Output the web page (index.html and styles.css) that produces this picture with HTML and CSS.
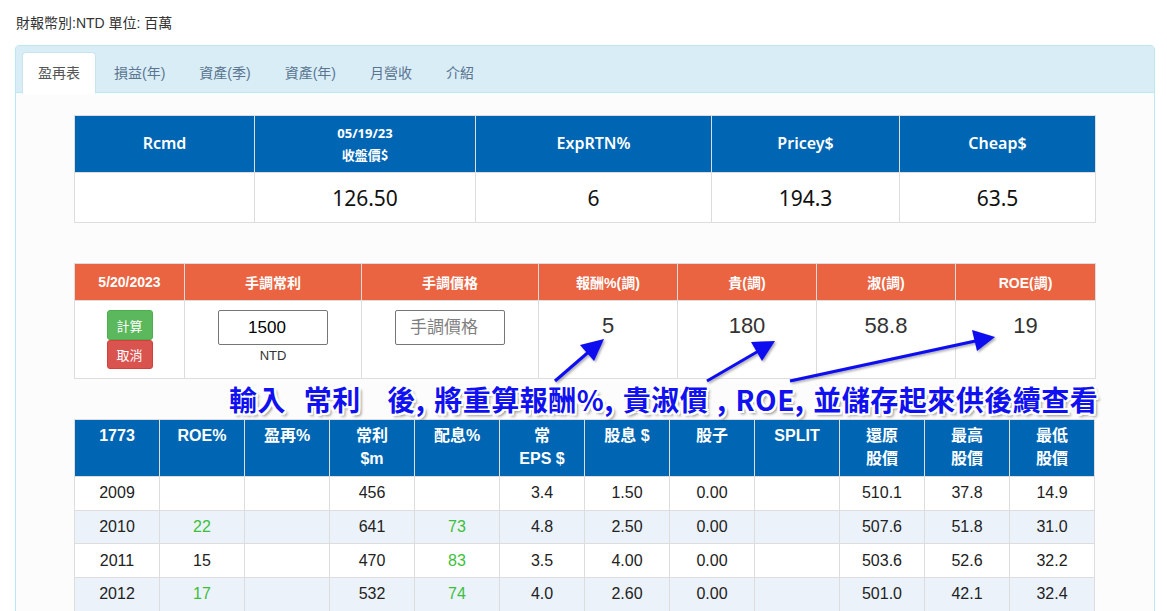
FILE: index.html
```html
<!DOCTYPE html>
<html>
<head>
<meta charset="utf-8">
<link rel="stylesheet" href="styles.css">
</head>
<body>
<div class="page">
  <div class="unit">財報幣別:NTD 單位: 百萬</div>
  <div class="panel">
    <div class="panel-heading">
      <ul class="tabs">
        <li class="tab active">盈再表</li>
        <li class="tab">損益(年)</li>
        <li class="tab">資產(季)</li>
        <li class="tab">資產(年)</li>
        <li class="tab">月營收</li>
        <li class="tab">介紹</li>
      </ul>
    </div>
    <div class="panel-body">
      <table class="t1">
        <colgroup><col style="width:180px"><col style="width:221px"><col style="width:236px"><col style="width:188px"><col style="width:196px"></colgroup>
        <tr class="h">
          <th>Rcmd</th>
          <th><span class="date">05/19/23</span><br><span class="sub">收盤價$</span></th>
          <th>ExpRTN%</th>
          <th>Pricey$</th>
          <th>Cheap$</th>
        </tr>
        <tr class="b">
          <td></td><td>126.50</td><td>6</td><td>194.3</td><td>63.5</td>
        </tr>
      </table>

      <table class="t2">
        <colgroup><col style="width:110px"><col style="width:177px"><col style="width:177px"><col style="width:139px"><col style="width:139px"><col style="width:139px"><col style="width:140px"></colgroup>
        <tr class="h">
          <th>5/20/2023</th><th>手調常利</th><th>手調價格</th><th>報酬%(調)</th><th>貴(調)</th><th>淑(調)</th><th>ROE(調)</th>
        </tr>
        <tr class="b">
          <td>
            <div class="btns">
              <button class="btn ok">計算</button>
              <button class="btn cancel">取消</button>
            </div>
          </td>
          <td><input class="inp" type="text" value="1500"><div class="ntd">NTD</div></td>
          <td><input class="inp" type="text" placeholder="手調價格"></td>
          <td class="val">5</td>
          <td class="val">180</td>
          <td class="val">58.8</td>
          <td class="val">19</td>
        </tr>
      </table>

      <table class="t3">
        <colgroup><col><col><col><col><col><col><col><col><col><col><col><col></colgroup>
        <tr class="h">
          <th>1773</th><th>ROE%</th><th>盈再%</th><th>常利<br>$m</th><th>配息%</th><th>常<br>EPS $</th><th>股息 $</th><th>股子</th><th>SPLIT</th><th>還原<br>股價</th><th>最高<br>股價</th><th>最低<br>股價</th>
        </tr>
        <tr>
          <td>2009</td><td></td><td></td><td>456</td><td></td><td>3.4</td><td>1.50</td><td>0.00</td><td></td><td>510.1</td><td>37.8</td><td>14.9</td>
        </tr>
        <tr class="alt">
          <td>2010</td><td class="g">22</td><td></td><td>641</td><td class="g">73</td><td>4.8</td><td>2.50</td><td>0.00</td><td></td><td>507.6</td><td>51.8</td><td>31.0</td>
        </tr>
        <tr>
          <td>2011</td><td>15</td><td></td><td>470</td><td class="g">83</td><td>3.5</td><td>4.00</td><td>0.00</td><td></td><td>503.6</td><td>52.6</td><td>32.2</td>
        </tr>
        <tr class="alt">
          <td>2012</td><td class="g">17</td><td></td><td>532</td><td class="g">74</td><td>4.0</td><td>2.60</td><td>0.00</td><td></td><td>501.0</td><td>42.1</td><td>32.4</td>
        </tr>
      </table>
    </div>
  </div>

  <svg class="arrows" width="1167" height="611" viewBox="0 0 1167 611">
    <defs>
      <filter id="sh" x="-20%" y="-20%" width="140%" height="140%">
        <feDropShadow dx="1.5" dy="1.5" stdDeviation="1" flood-color="#000" flood-opacity="0.35"/>
      </filter>
    </defs>
    <g filter="url(#sh)" fill="#0a0aef" stroke="#0a0aef">
      <line x1="555" y1="381" x2="592" y2="349" stroke-width="3"/>
      <polygon points="604,339 580,345 594,361" stroke="none"/>
      <line x1="707" y1="381" x2="762" y2="349" stroke-width="3"/>
      <polygon points="775,341 751,342 762,361" stroke="none"/>
      <line x1="790" y1="381" x2="980" y2="340" stroke-width="3"/>
      <polygon points="995,337 972,330 977,351" stroke="none"/>
    </g>
  </svg>
  <div class="annot">輸入  常利   後, 將重算報酬%, 貴淑價 , ROE, 並儲存起來供後續查看</div>
</div>
</body>
</html>
```

FILE: styles.css
```css
html, body {
  margin: 0;
  padding: 0;
  background: #fff;
}
body {
  font-family: "Liberation Sans", "Noto Sans CJK TC", sans-serif;
  color: #333;
  overflow: hidden;
}
.page {
  position: relative;
  width: 1167px;
  height: 611px;
  overflow: hidden;
}
.unit {
  padding: 14px 0 0 16px;
  font-size: 14px;
  line-height: 18px;
  color: #333;
}
.panel {
  margin: 13px 0 0 15px;
  width: 1140px;
  box-sizing: border-box;
  border: 1px solid #bce8f1;
  border-radius: 4px;
  background: #fcfcfc;
}
.panel-heading {
  background: #d9edf7;
  border-bottom: 1px solid #bce8f1;
  border-radius: 3px 3px 0 0;
  padding: 6px 6px 0;
  height: 40px;
}
.tabs {
  list-style: none;
  margin: 0;
  padding: 0;
  display: flex;
}
.tab {
  padding: 10px 15px;
  line-height: 20px;
  font-size: 14px;
  border: 1px solid transparent;
  border-radius: 4px 4px 0 0;
  margin-right: 2px;
  color: #5a7590;
}
.tab.active {
  background: #fff;
  border-color: #c8e5ee #c8e5ee #fff;
  color: #555;
}
.panel-body {
  padding: 22px 59px 40px 58px;
}
table {
  border-collapse: collapse;
  width: 100%;
  table-layout: fixed;
  text-align: center;
}
th, td {
  border: 1px solid #ddd;
  padding: 0;
  box-sizing: border-box;
}
.t1 th {
  background: #0066b4;
  color: #fff;
  height: 57px;
  font-family: "Noto Sans", "Noto Sans CJK TC", sans-serif;
  font-weight: 600;
  font-size: 16px;
  padding-bottom: 3px;
}
.t1 .date {
  font-size: 13px;
  line-height: 20px;
  font-weight: 700;
}
.t1 .sub {
  font-family: "Noto Sans CJK TC", sans-serif;
  font-size: 13px;
  line-height: 20px;
  font-weight: 700;
}
.t1 td {
  background: #fff;
  height: 50px;
  font-family: "Noto Sans", sans-serif;
  font-size: 21px;
  color: #111;
}
.t2 {
  margin-top: 40px;
}
.t2 th {
  background: #ea6442;
  color: #fff;
  height: 37px;
  font-size: 14px;
  font-weight: 700;
}
.t2 td {
  background: #fff;
  height: 78px;
  vertical-align: top;
  padding-top: 9px;
}
.t2 td.val {
  font-size: 22px;
  line-height: 26px;
  padding-top: 12px;
  color: #333;
}
.btns {
  display: flex;
  flex-direction: column;
  align-items: center;
}
.btn {
  width: 46px;
  border-radius: 3px;
  color: #fff;
  font-family: "Noto Sans CJK TC", sans-serif;
  font-size: 13px;
  padding: 0;
  margin: 0;
  box-sizing: border-box;
}
.btn.ok {
  height: 30px;
  background: #5cb85c;
  border: 1px solid #4cae4c;
}
.btn.cancel {
  height: 29px;
  background: #d9534f;
  border: 1px solid #d43f3a;
}
.inp {
  display: block;
  width: 110px;
  height: 35px;
  box-sizing: border-box;
  border: 1px solid #767676;
  border-radius: 2px;
  font-family: "Liberation Sans", "Noto Sans CJK TC", sans-serif;
  font-size: 17px;
  text-align: center;
  padding: 0 12px 0 0;
  color: #000;
  margin: 0 auto;
}
.inp::placeholder {
  color: #808080;
}
.ntd {
  font-size: 13px;
  line-height: 18px;
  margin-top: 2px;
  color: #333;
}
.t3 {
  margin-top: 40px;
}
.t3 th {
  background: #0066b4;
  color: #fff;
  height: 57px;
  font-size: 16px;
  line-height: 23px;
  font-weight: 700;
  vertical-align: top;
  padding-top: 4px;
}
.t3 td {
  background: #fff;
  height: 33.7px;
  font-size: 16px;
  color: #222;
}
.t3 tr.alt td {
  background: #ebf2fa;
}
.t3 td.g {
  color: #3cbf3c;
}
.arrows {
  position: absolute;
  left: 0;
  top: 0;
  pointer-events: none;
}
.annot {
  position: absolute;
  left: 229px;
  top: 380px;
  white-space: pre;
  font-family: "Noto Sans CJK TC", sans-serif;
  font-weight: 700;
  font-size: 28px;
  line-height: 38px;
  word-spacing: 2px;
  letter-spacing: 0.5px;
  color: #1010f0;
  text-shadow:
    2px 0 0 #fff, -2px 0 0 #fff, 0 2px 0 #fff, 0 -2px 0 #fff,
    2px 2px 0 #fff, -2px -2px 0 #fff, 2px -2px 0 #fff, -2px 2px 0 #fff,
    3px 3px 3px rgba(0,0,0,0.45);
}
```
